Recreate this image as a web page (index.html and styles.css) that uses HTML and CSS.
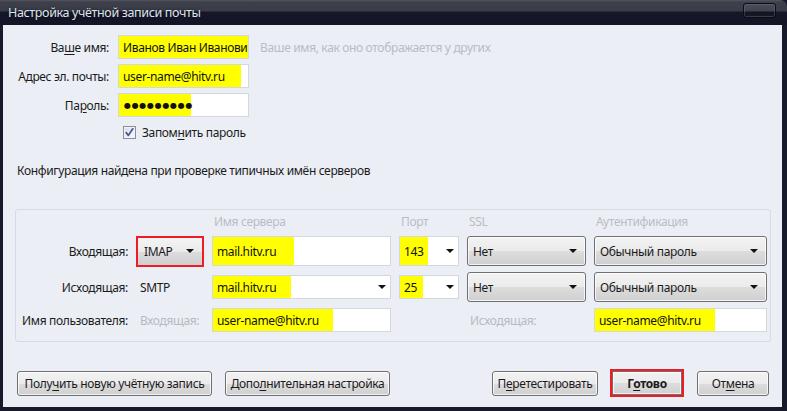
FILE: index.html
```html
<!DOCTYPE html>
<html lang="ru">
<head>
<meta charset="utf-8">
<title>Настройка учётной записи почты</title>
<link rel="stylesheet" href="styles.css">
</head>
<body>
<div class="window">
  <div class="titlebar">
    <span class="title">Настройка учётной записи почты</span>
    <span class="close-btn"></span>
  </div>
  <div class="client">
    <div class="identity">
      <label class="lbl">Ва<u>ш</u>е имя:</label>
      <div class="field"><span class="hl hl-full">Иванов Иван Иванович</span></div>
      <span class="hint">Ваше имя, как оно отображается у других</span>

      <label class="lbl">Адрес эл. почты:</label>
      <div class="field"><span class="hl hl-email">user-name@hitv.ru</span></div>
      <span></span>

      <label class="lbl">Па<u>р</u>оль:</label>
      <div class="field"><span class="hl hl-pass dots">●●●●●●●●●</span></div>
      <span></span>
    </div>

    <div class="remember">
      <span class="checkbox">
        <svg width="11" height="11" viewBox="0 0 11 11"><path d="M2.2 5.6 L4.4 8.4 L8.8 1.8" fill="none" stroke="#3c55a8" stroke-width="1.7" stroke-linejoin="round" stroke-linecap="round"/></svg>
      </span>
      <span>Запом<u>н</u>ить пароль</span>
    </div>

    <p class="status">Конфигурация найдена при проверке типичных имён серверов</p>

    <div class="servers">
      <span></span>
      <span></span>
      <span class="colhead">Имя сервера</span>
      <span class="colhead">Порт</span>
      <span class="colhead">SSL</span>
      <span class="colhead">Аутентификация</span>

      <span class="rowlbl">Входящая:</span>
      <div class="select select-marked"><span>IMAP</span><span class="arrow"></span></div>
      <div class="field tall"><span class="hl hl-srv1">mail.hitv.ru</span></div>
      <div class="field tall combo"><span class="hl hl-port1">143</span><span class="arrow"></span></div>
      <div class="select"><span>Нет</span><span class="arrow"></span></div>
      <div class="select"><span>Обычный пароль</span><span class="arrow"></span></div>

      <span class="rowlbl">Исходящая:</span>
      <span class="plain">SMTP</span>
      <div class="field combo"><span class="hl hl-srv2">mail.hitv.ru</span><span class="arrow"></span></div>
      <div class="field combo"><span class="hl hl-port2">25</span><span class="arrow"></span></div>
      <div class="select"><span>Нет</span><span class="arrow"></span></div>
      <div class="select"><span>Обычный пароль</span><span class="arrow"></span></div>

      <span class="rowlbl">Имя пользователя:</span>
      <span class="plain muted">Входящая:</span>
      <div class="field"><span class="hl hl-user1">user-name@hitv.ru</span></div>
      <span></span>
      <span class="plain muted">Исходящая:</span>
      <div class="field"><span class="hl hl-user2">user-name@hitv.ru</span></div>
    </div>

    <div class="actions">
      <button class="btn btn-new">Полу<u>ч</u>ить новую учётную запись</button>
      <button class="btn btn-adv">Допо<u>л</u>нительная настройка</button>
      <span class="spacer"></span>
      <button class="btn btn-retest">П<u>е</u>ретестировать</button>
      <button class="btn btn-done">Г<u>о</u>тово</button>
      <button class="btn btn-cancel">От<u>м</u>ена</button>
    </div>
  </div>
</div>
</body>
</html>
```

FILE: styles.css
```css
* { box-sizing: border-box; }
html, body { margin: 0; padding: 0; }
body {
  width: 787px;
  height: 411px;
  overflow: hidden;
  font-family: "Noto Sans", "DejaVu Sans", sans-serif;
  font-size: 12px;
  letter-spacing: -0.35px;
  color: #1b1b1b;
  background: #161827;
}
u { text-decoration: underline; text-underline-offset: 2px; }

.window {
  width: 787px;
  height: 411px;
  display: flex;
  flex-direction: column;
  background: #171a2b;
  border-top-right-radius: 7px;
  overflow: hidden;
}

.titlebar {
  height: 25px;
  flex: none;
  display: flex;
  align-items: flex-start;
  justify-content: space-between;
  background: linear-gradient(#54565f 0, #3d3f4b 2px, #3a3c48 11px, #161829 12px, #131526 25px);
}
.title {
  color: #dfe3ec;
  padding: 5px 0 0 8px;
  font-size: 12.5px;
  line-height: 16px;
  text-shadow: 0 0 3px rgba(0,0,0,.6);
}
.close-btn {
  width: 33px;
  height: 15px;
  margin: 3px 11px 0 0;
  border: 1px solid #0b0c14;
  border-radius: 3px;
  background: linear-gradient(#4b4d5a 0, #41434f 7px, #13141f 8px, #191b28 15px);
  box-shadow: inset 0 0 0 1px rgba(120,122,140,.35);
}

.client {
  flex: 1;
  margin: 0 5px 4px 3px;
  background: #ebeef4;
  display: flex;
  flex-direction: column;
}

.identity {
  display: grid;
  grid-template-columns: 106px 131px 1fr;
  grid-auto-rows: 24px;
  column-gap: 9px;
  row-gap: 5px;
  padding-top: 10px;
  align-items: center;
}
.lbl { text-align: right; white-space: nowrap; }
.hint { color: #b7bcc6; padding-left: 2px; white-space: nowrap; }

.field {
  height: 24px;
  background: #fff;
  border: 1px solid #d3d7de;
  display: flex;
  align-items: stretch;
  overflow: hidden;
  white-space: nowrap;
}
.field.tall { height: 30px; }
.hl {
  background: #ffff00;
  display: flex;
  align-items: center;
  padding-left: 4px;
  color: #111;
  flex: none;
  overflow: hidden;
}
.hl-full { width: 100%; }
.hl-email { width: 122px; }
.hl-pass { width: 72px; }
.dots {
  font-family: "DejaVu Sans", sans-serif;
  font-size: 8px;
  letter-spacing: 0.7px;
  padding-left: 5px;
  overflow: visible;
}
.hl-srv1 { width: 81px; }
.hl-srv2 { width: 78px; }
.hl-port1 { width: 28px; }
.hl-port2 { width: 23px; }
.hl-user1 { width: 120px; }
.hl-user2 { width: 120px; }

.combo .arrow, .select .arrow {
  margin-left: auto;
  align-self: center;
}
.arrow {
  width: 0; height: 0;
  border-left: 4px solid transparent;
  border-right: 4px solid transparent;
  border-top: 4px solid #111;
  flex: none;
}
.field.combo .arrow { margin-right: 4px; }

.remember {
  display: flex;
  align-items: center;
  gap: 6px;
  margin: 8px 0 0 120px;
  height: 14px;
}
.checkbox {
  width: 13px;
  height: 13px;
  border: 1px solid #8e8f94;
  background: linear-gradient(135deg, #dcdde2, #fbfbfc);
  display: flex;
  align-items: center;
  justify-content: center;
  box-shadow: inset 0 0 0 1px #f2f2f4;
}

.status {
  margin: 24px 0 0 14px;
  line-height: 16px;
}

.servers {
  margin: 30px 11px 0 12px;
  border: 1px solid #d6dbe3;
  border-radius: 3px;
  height: 133px;
  display: grid;
  grid-template-columns: 113px 67px 179px 60px 119px 173px;
  grid-template-rows: 16px 30px 30px 24px;
  column-gap: 8px;
  row-gap: 6px;
  padding-top: 4px;
  align-items: center;
}
.colhead { color: #b9bdc5; padding-left: 2px; line-height: 16px; }
.rowlbl { text-align: right; white-space: nowrap; padding-right: 1px; }
.plain { padding-left: 3px; }
.muted { color: #b6bac2; }

.select {
  height: 30px;
  border: 1px solid #707070;
  border-radius: 3px;
  background: linear-gradient(#f3f3f3 0, #ebebeb 50%, #dddddd 51%, #cfcfcf 100%);
  box-shadow: inset 0 0 0 1px rgba(255,255,255,.75);
  display: flex;
  align-items: center;
  padding: 0 8px 0 5px;
  white-space: nowrap;
}
.select-marked {
  border: 2px solid #ee1c24;
  border-radius: 0;
  margin-left: -1px;
  height: 31px;
  padding-left: 6px;
  padding-right: 8px;
  box-shadow: none;
}

.actions {
  margin-top: auto;
  margin-bottom: 10px;
  display: flex;
  align-items: center;
  padding: 0 13px 0 14px;
  gap: 13px;
}
.spacer { flex: 1; }
.btn {
  font: inherit;
  letter-spacing: inherit;
  color: #1b1b1b;
  height: 25px;
  border: 1px solid #707070;
  border-radius: 3px;
  background: linear-gradient(#f2f2f2 0, #ebebeb 50%, #dddddd 51%, #cfcfcf 100%);
  box-shadow: inset 0 0 0 1px rgba(255,255,255,.75);
  padding: 0 4px;
  white-space: nowrap;
}
.btn-new { width: 195px; }
.btn-adv { width: 165px; }
.btn-retest { width: 106px; margin-right: -1px; }
.btn-done {
  width: 74px;
  height: 28px;
  border: 2px solid #ee1c24;
  border-radius: 0;
  font-weight: bold;
  box-shadow: inset 0 0 0 1px #6f6f6f, inset 0 0 0 2px rgba(255,255,255,.7);
}
.btn-cancel { width: 72px; }
```
